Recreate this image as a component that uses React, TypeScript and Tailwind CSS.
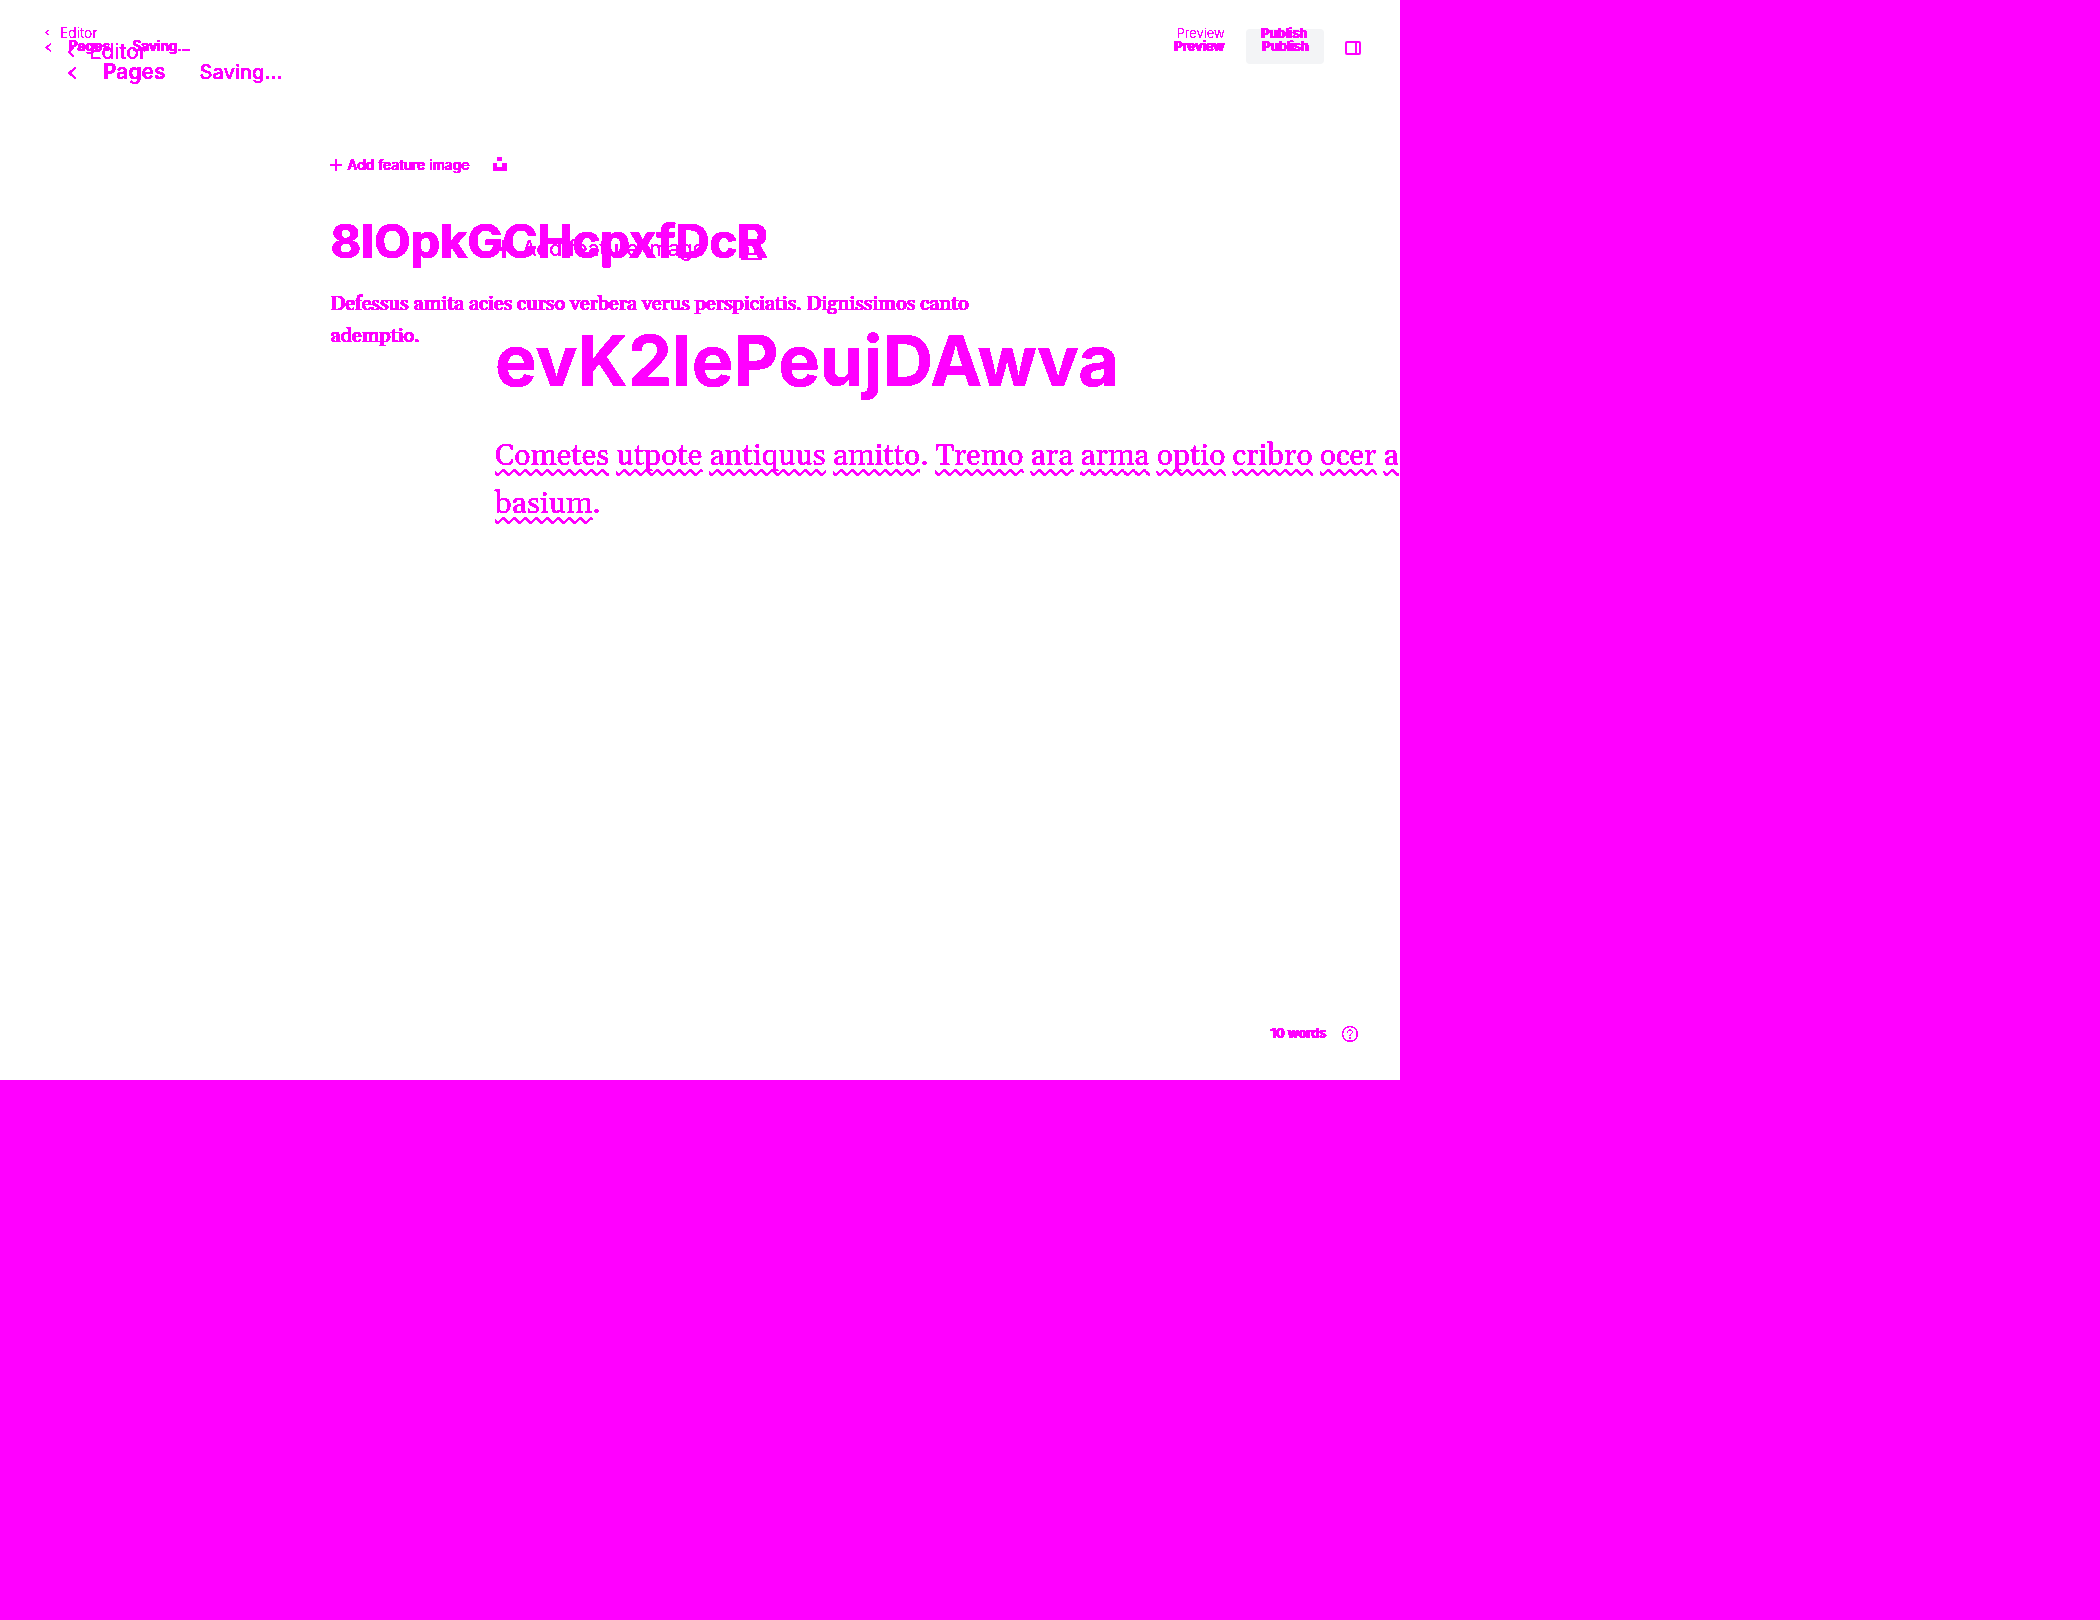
import type { ReactNode } from "react";

function Chevron({ className }: { className: string }) {
  return (
    <svg viewBox="0 0 6 10" fill="none" stroke="currentColor" preserveAspectRatio="none" className={className} aria-hidden="true">
      <path d="M5 1 1 5l4 4" strokeWidth="1.3" />
    </svg>
  );
}

function Plus({ className }: { className: string }) {
  return (
    <svg viewBox="0 0 12 12" fill="currentColor" className={className} aria-hidden="true">
      <path d="M5 0h2v5h5v2H7v5H5V7H0V5h5z" />
    </svg>
  );
}

function Unsplash({ className }: { className: string }) {
  return (
    <svg viewBox="0 0 14 14" fill="currentColor" className={className} aria-hidden="true">
      <path d="M4 0h5v4H4zM0 6h4v4h5V6h5v8H0z" />
    </svg>
  );
}

function UnsplashOutline({ className }: { className: string }) {
  return (
    <svg viewBox="0 0 14 14" fill="none" stroke="currentColor" className={className} aria-hidden="true">
      <path d="M4.5.5h5v3.5h-5zM.5 6h4v4h5V6h4v7.5H.5z" />
    </svg>
  );
}

function Filters() {
  return (
    <svg className="hidden" aria-hidden="true">
      <filter id="crisp" x="0" y="0" width="1" height="1" colorInterpolationFilters="sRGB">
        <feComponentTransfer>
          <feFuncA type="discrete" tableValues="0 0 1 1 1 1 1 1 1 1" />
        </feComponentTransfer>
      </filter>
      <filter id="thin" x="0" y="0" width="1" height="1" colorInterpolationFilters="sRGB">
        <feComponentTransfer>
          <feFuncA type="discrete" tableValues="0 0 0 1 1 1 1 1 1 1" />
        </feComponentTransfer>
      </filter>
    </svg>
  );
}

function Word({ children }: { children: ReactNode }) {
  return (
    <span className="underline decoration-wavy decoration-2 underline-offset-4 [text-decoration-skip-ink:none]">{children}</span>
  );
}

function EditorView() {
  return (
    <section className="col-start-1 row-start-1 flex min-w-0 flex-col pt-[26px] pb-[37px] text-sm leading-[14px]">
      <header className="flex flex-col pr-[39px] pl-[45px]">
        <div className="relative z-10 flex h-[13px] items-center text-[13px]">
          <a href="#editor" className="flex items-center gap-[10px] text-sm leading-[14px] font-light [filter:url(#thin)]">
            <Chevron className="h-[7px] w-[5px]" />
            Editor
          </a>
          <button className="mr-9 ml-auto font-light [filter:url(#thin)]">Preview</button>
          <button className="mr-[54px] font-semibold [filter:url(#crisp)] [text-shadow:1px_0_currentColor]">Publish</button>
        </div>
        <div className="flex h-[14px] items-center">
          <a href="#pages" className="flex items-center gap-4 font-semibold [filter:url(#crisp)] [text-shadow:1px_0_currentColor]">
            <Chevron className="mt-[3px] h-[9px] w-[7px]" />
            Pages
          </a>
          <span className="ml-[22px] pr-1 font-medium [filter:url(#crisp)] [text-shadow:1px_0_currentColor]">Saving...</span>
          <button className="ml-auto text-[13px] font-semibold [filter:url(#crisp)] [text-shadow:1px_0_currentColor]">Preview</button>
          <button className="ml-[22px] h-[35px] w-[78px] shrink-0 rounded bg-gray-100 text-[13px] font-semibold">
            <span className="block [filter:url(#crisp)] [text-shadow:1px_0_currentColor]">Publish</span>
          </button>
          <button aria-label="Settings" className="mt-1 ml-[21px] shrink-0">
            <svg viewBox="0 0 16 14" className="block h-[14px] w-4" fill="none" stroke="currentColor" strokeWidth="2">
              <rect x="1" y="1" width="14" height="12" rx="1" />
              <path d="M11 1v12" />
            </svg>
          </button>
        </div>
      </header>
      <article className="mx-auto mt-[102px] w-[740px] [filter:url(#crisp)]">
        <div className="flex h-5 items-center">
          <button className="flex items-center gap-[5px] [text-shadow:1px_0_currentColor]">
            <Plus className="h-3 w-3" />
            Add feature image
          </button>
          <button aria-label="Unsplash" className="mb-[2px] ml-6">
            <Unsplash className="block h-[14px] w-[14px]" />
          </button>
        </div>
        <h1 className="mt-[38px] text-[47px] leading-[56px] font-bold [text-shadow:1px_0_currentColor]">8IOpkGCHcpxfDcR</h1>
        <p className="mt-[19px] max-w-[720px] font-[Georgia,Gelasio,'Liberation_Serif',serif] text-xl leading-8 [font-kerning:none] [font-variant-ligatures:none] [text-shadow:1px_0_currentColor]">
          Defessus amita acies curso verbera verus perspiciatis. Dignissimos canto ademptio.
        </p>
      </article>
      <footer className="mt-auto mr-[42px] flex h-5 items-center justify-end gap-4 text-[13px] font-semibold">
        <span className="[filter:url(#crisp)] [text-shadow:1px_0_currentColor]">10 words</span>
        <button aria-label="Help" className="mt-[2px] [filter:url(#crisp)]">
          <svg viewBox="0 0 16 16" className="block h-4 w-4" fill="none" stroke="currentColor">
            <circle cx="8" cy="8" r="7.4" />
            <path d="M5.5 6.5c0-1.6 1-2.5 2.5-2.5s2.5.8 2.5 2c0 1.8-2.5 1.7-2.5 3.5M8 11.5v1" />
          </svg>
        </button>
      </footer>
    </section>
  );
}

function ScaledView() {
  return (
    <section className="pointer-events-none relative z-20 col-start-1 row-start-1 min-w-0 pt-[42px]">
      <header className="flex flex-col pl-[68px] text-[21px] leading-5 [filter:url(#crisp)]">
        <a href="#editor" className="flex h-5 items-center gap-[14px]">
          <Chevron className="h-3 w-[7px]" />
          Editor
        </a>
        <div className="flex h-5 items-center">
          <a href="#pages" className="flex items-center gap-[26px] font-semibold">
            <Chevron className="mt-[2px] h-[14px] w-[9px]" />
            Pages
          </a>
          <span className="ml-[34px] text-xl leading-5 font-medium">Saving...</span>
        </div>
      </header>
      <article className="mt-[152px] ml-[495px]">
        <div className="flex h-[30px] items-center text-[21px] [filter:url(#thin)]">
          <button className="flex items-center gap-[9px]">
            <Plus className="h-[18px] w-[18px]" />
            Add feature image
          </button>
          <button aria-label="Unsplash" className="ml-9">
            <UnsplashOutline className="block h-[21px] w-[21px]" />
          </button>
        </div>
        <h2 className="mt-[55px] text-[70px] leading-[84px] font-bold [filter:url(#crisp)]">evK2IePeujDAwva</h2>
        <p className="mt-[29px] font-[Georgia,Gelasio,'Liberation_Serif',serif] text-3xl leading-[48px] whitespace-nowrap [filter:url(#crisp)] [font-kerning:none] [font-variant-ligatures:none]">
          <Word>Cometes</Word> <Word>utpote</Word> <Word>antiquus</Word> <Word>amitto</Word>. <Word>Tremo</Word>{" "}
          <Word>ara</Word> <Word>arma</Word> <Word>optio</Word> <Word>cribro</Word> <Word>ocer</Word> <Word>a</Word>
          <br />
          <Word>basium</Word>.
        </p>
      </article>
    </section>
  );
}

export default function App() {
  return (
    <div className="min-h-screen bg-[#ff00ff] font-[Inter,sans-serif] text-[#ff00ff]">
      <Filters />
      <main className="grid min-h-[1080px] w-2/3 grid-cols-1 overflow-hidden bg-white">
        <EditorView />
        <ScaledView />
      </main>
    </div>
  );
}
